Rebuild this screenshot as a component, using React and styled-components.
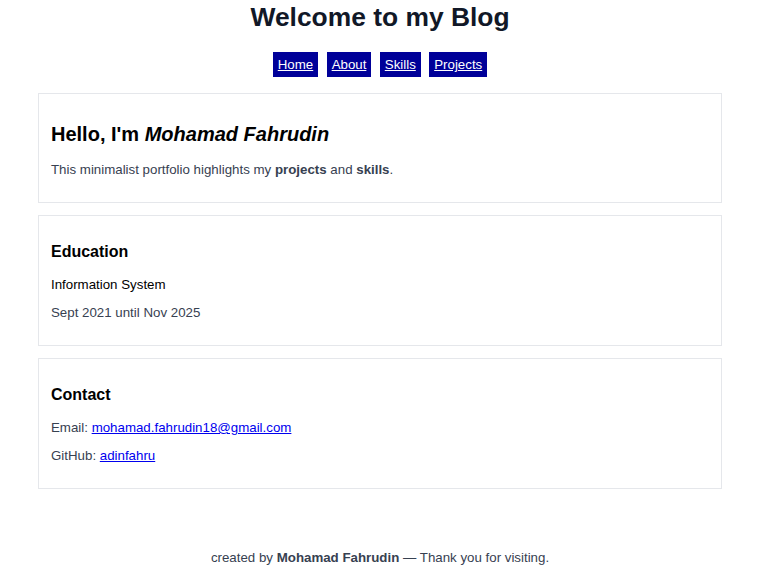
import React from "react";
import styled, { createGlobalStyle } from "styled-components";

const Global = createGlobalStyle`
  html, body { margin: 0; padding: 0; background: #ffffff; }
  body { font-family: "Liberation Sans", Arial, sans-serif; }
`;

const Page = styled.div`
  padding: 2px 36px 0 38px;
  display: flex;
  flex-direction: column;
  align-items: stretch;
`;

const Title = styled.h1`
  margin: 0;
  text-align: center;
  font-size: 26.4px;
  line-height: 30px;
  font-weight: 700;
  color: #111827;
`;

const Nav = styled.nav`
  display: flex;
  justify-content: center;
  gap: 8.4px;
  margin-top: 20px;
`;

const NavLink = styled.a`
  display: block;
  background: #000099;
  color: #ffffff;
  text-decoration: underline;
  font-size: 13.3px;
  line-height: 15px;
  padding: 5px 5px;
  cursor: pointer;
`;

const Cards = styled.main`
  display: flex;
  flex-direction: column;
  gap: 12px;
  margin-top: 16px;
`;

const Card = styled.section`
  border: 1px solid #e5e7eb;
  background: #ffffff;
  padding: 12px;
`;

const BigHeading = styled.h2`
  margin: 17px 0 16px;
  font-size: 20px;
  line-height: 23px;
  font-weight: 700;
  color: #000000;
`;

const Heading = styled.h3`
  margin: 15px 0 16px;
  font-size: 16px;
  line-height: 18px;
  font-weight: 700;
  color: #000000;
`;

const Text = styled.p`
  margin: 13px 0;
  font-size: 13.3px;
  line-height: 15px;
  color: ${(p) => (p.$strong ? "#000000" : "#374151")};
`;

const Link = styled.a`
  color: #0000ee;
  text-decoration: underline;
`;

const Footer = styled.footer`
  margin-top: 61px;
  text-align: center;
  font-size: 13.3px;
  line-height: 15px;
  color: #374151;
`;

export default function App() {
  return (
    <>
      <Global />
      <Page>
        <Title>Welcome to my Blog</Title>
        <Nav>
          <NavLink>Home</NavLink>
          <NavLink>About</NavLink>
          <NavLink>Skills</NavLink>
          <NavLink>Projects</NavLink>
        </Nav>
        <Cards>
          <Card>
            <BigHeading>
              Hello, I'm <em>Mohamad Fahrudin</em>
            </BigHeading>
            <Text>
              This minimalist portfolio highlights my <strong>projects</strong> and{" "}
              <strong>skills</strong>.
            </Text>
          </Card>
          <Card>
            <Heading>Education</Heading>
            <Text $strong>Information System</Text>
            <Text>Sept 2021 until Nov 2025</Text>
          </Card>
          <Card>
            <Heading>Contact</Heading>
            <Text>
              Email: <Link>mohamad.fahrudin18@gmail.com</Link>
            </Text>
            <Text>
              GitHub: <Link>adinfahru</Link>
            </Text>
          </Card>
        </Cards>
        <Footer>
          created by <strong>Mohamad Fahrudin</strong> — Thank you for visiting.
        </Footer>
      </Page>
    </>
  );
}
